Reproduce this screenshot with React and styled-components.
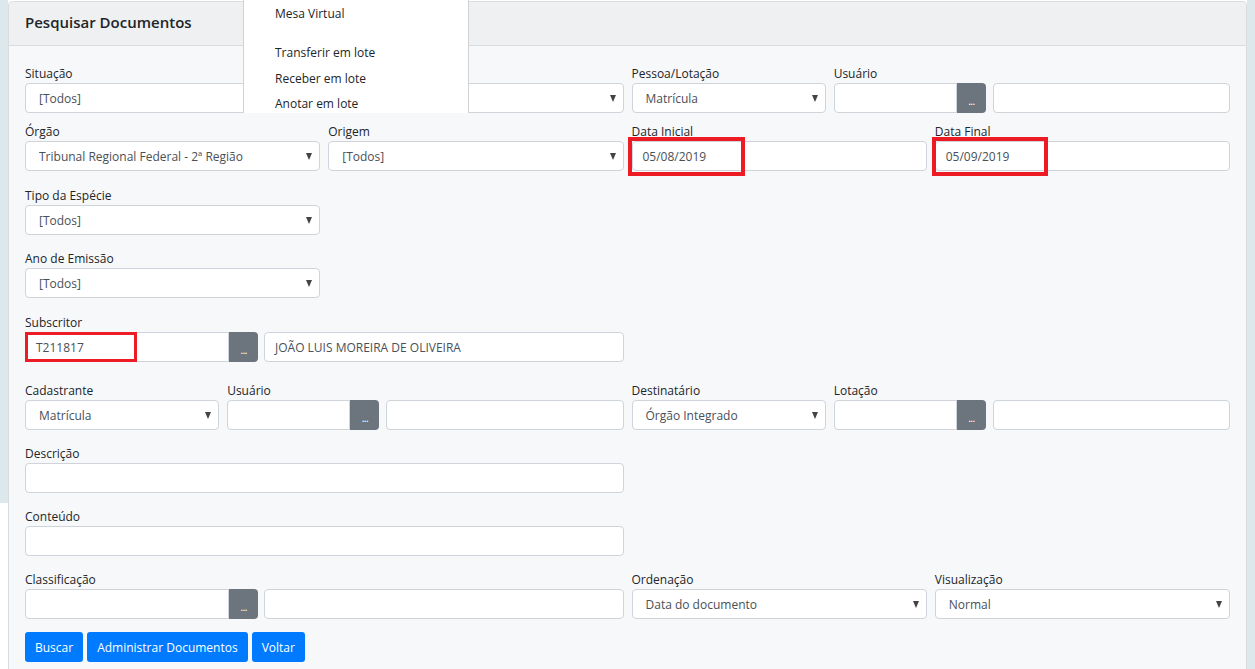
import React from "react";
import styled, { createGlobalStyle } from "styled-components";

const GlobalStyle = createGlobalStyle`
  html, body { margin: 0; padding: 0; background: #fff; }
  body {
    font-family: "Open Sans", "Noto Sans", sans-serif;
    font-size: 12px;
    color: #212529;
  }
  * { box-sizing: border-box; }
`;

const Page = styled.div`
  position: relative;
  display: flex;
  width: 1255px;
  height: 669px;
  overflow: hidden;
`;

const SideStrip = styled.div`
  flex: 0 0 ${(p) => p.$w}px;
  background: ${(p) =>
    p.$cut
      ? `linear-gradient(#dce8ec 0, #dce8ec ${p.$cut}px, #fff ${p.$cut}px)`
      : "#dce8ec"};
`;

const Card = styled.section`
  flex: 1;
  align-self: flex-start;
  margin-top: 1px;
  min-height: 720px;
  background: #f7f8fa;
  border: 1px solid #dadde0;
  border-radius: 4px;
`;

const CardHeader = styled.header`
  height: 44px;
  display: flex;
  align-items: center;
  padding: 0 16px 4px;
  background: #eff0f2;
  border-bottom: 1px solid #dadde0;
  border-radius: 4px 4px 0 0;
`;

const Title = styled.h5`
  margin: 0;
  font-size: 15px;
  font-weight: 600;
  color: #212529;
`;

const CardBody = styled.div`
  padding: 18px 16px 0;
`;

const Row = styled.div`
  display: grid;
  grid-template-columns: repeat(12, 1fr);
  column-gap: 8px;
  margin-bottom: ${(p) => p.$mb}px;
`;

const Field = styled.div`
  grid-column: span ${(p) => p.$span};
  display: flex;
  flex-direction: column;
  min-width: 0;
`;

const Label = styled.label`
  display: block;
  height: 19px;
  line-height: 19px;
  white-space: nowrap;
  color: #212529;
`;

const Control = styled.div`
  position: relative;
  flex: ${(p) => (p.$grow ? "1 1 auto" : "0 0 auto")};
  height: 30px;
  min-width: 0;
  display: flex;
  align-items: center;
  padding: ${(p) => (p.$select ? "0 7px 0 13px" : "0 10px")};
  background: #fff;
  border: 1px solid #ced4da;
  border-radius: ${(p) => (p.$joined ? "4px 0 0 4px" : "4px")};
  color: #495057;
  white-space: nowrap;
`;

const SelectText = styled.span`
  flex: 1;
  overflow: hidden;
`;

const Caret = styled.span`
  width: 0;
  height: 0;
  border-left: 3.5px solid transparent;
  border-right: 3.5px solid transparent;
  border-top: 7px solid #444;
`;

const Pair = styled.div`
  display: grid;
  grid-template-columns: ${(p) => p.$first}px 1fr;
  column-gap: ${(p) => p.$gap}px;
`;

const Group = styled.div`
  display: flex;
`;

const DotsButton = styled.button`
  flex: 0 0 29px;
  height: 30px;
  border: none;
  border-radius: 0 4px 4px 0;
  background: #6c757d;
  color: #fff;
  font-family: "DejaVu Sans", sans-serif;
  font-size: 10px;
  line-height: 1;
  padding: 8px 0 0;
  letter-spacing: -1px;
`;

const Highlight = styled.span`
  position: absolute;
  left: ${(p) => p.$l}px;
  top: ${(p) => p.$t}px;
  width: ${(p) => p.$w}px;
  height: ${(p) => p.$h}px;
  border: ${(p) => p.$b}px solid #ed1c24;
  pointer-events: none;
`;

const Buttons = styled.div`
  display: flex;
  gap: 4px;
`;

const PrimaryButton = styled.button`
  height: 30px;
  padding: 0 10px;
  border: none;
  border-radius: 3px;
  background: #007bff;
  color: #fff;
  font-family: inherit;
  font-size: 12px;
`;

const Menu = styled.ul`
  position: absolute;
  left: 243px;
  top: 0;
  width: 226px;
  height: 113px;
  margin: 0;
  padding: 1px 0 0;
  list-style: none;
  background: #fff;
  border-left: 1px solid #d2d2d2;
  border-right: 1px solid #d2d2d2;
  overflow: hidden;
`;

const MenuItem = styled.li`
  height: 25.5px;
  line-height: 25.5px;
  padding: 0 31px;
  color: #212529;
  white-space: nowrap;
`;

const MenuDivider = styled.li`
  height: 13.5px;
`;

const MenuMarker = styled.span`
  position: absolute;
  left: 245px;
  top: -40px;
  width: 224px;
  height: 45.5px;
  border: 5px solid #ed1c24;
`;

const Select = ({ children }) => (
  <Control $select>
    <SelectText>{children}</SelectText>
    <Caret />
  </Control>
);

const Lookup = ({ value, mark }) => (
  <Group>
    <Control $joined $grow>
      {value}
      {mark}
    </Control>
    <DotsButton>...</DotsButton>
  </Group>
);

export default function App() {
  return (
    <>
      <GlobalStyle />
      <Page>
        <SideStrip $w={8} $cut={503} />
        <Card>
          <CardHeader>
            <Title>Pesquisar Documentos</Title>
          </CardHeader>
          <CardBody>
            <Row $mb={9}>
              <Field $span={3}>
                <Label>Situação</Label>
                <Select>[Todos]</Select>
              </Field>
              <Field $span={3}>
                <Label />
                <Select />
              </Field>
              <Field $span={2}>
                <Label>Pessoa/Lotação</Label>
                <Select>Matrícula</Select>
              </Field>
              <Field $span={4}>
                <Label>Usuário</Label>
                <Pair $first={152} $gap={7}>
                  <Lookup />
                  <Control />
                </Pair>
              </Field>
            </Row>

            <Row $mb={15}>
              <Field $span={3}>
                <Label>Órgão</Label>
                <Select>Tribunal Regional Federal - 2ª Região</Select>
              </Field>
              <Field $span={3}>
                <Label>Origem</Label>
                <Select>[Todos]</Select>
              </Field>
              <Field $span={3}>
                <Label>Data Inicial</Label>
                <Control>
                  05/08/2019
                  <Highlight $l={-5} $t={-5} $w={117} $h={39} $b={4} />
                </Control>
              </Field>
              <Field $span={3}>
                <Label>Data Final</Label>
                <Control>
                  05/09/2019
                  <Highlight $l={-4} $t={-5} $w={116} $h={39} $b={4} />
                </Control>
              </Field>
            </Row>

            <Row $mb={14}>
              <Field $span={3}>
                <Label>Tipo da Espécie</Label>
                <Select>[Todos]</Select>
              </Field>
            </Row>

            <Row $mb={15}>
              <Field $span={3}>
                <Label>Ano de Emissão</Label>
                <Select>[Todos]</Select>
              </Field>
            </Row>

            <Row $mb={19}>
              <Field $span={6}>
                <Label>Subscritor</Label>
                <Pair $first={233} $gap={6}>
                  <Lookup
                    value="T211817"
                    mark={<Highlight $l={-1} $t={-1} $w={112} $h={30} $b={3} />}
                  />
                  <Control>JOÃO LUIS MOREIRA DE OLIVEIRA</Control>
                </Pair>
              </Field>
            </Row>

            <Row $mb={14}>
              <Field $span={2}>
                <Label>Cadastrante</Label>
                <Select>Matrícula</Select>
              </Field>
              <Field $span={4}>
                <Label>Usuário</Label>
                <Pair $first={152} $gap={7}>
                  <Lookup />
                  <Control />
                </Pair>
              </Field>
              <Field $span={2}>
                <Label>Destinatário</Label>
                <Select>Órgão Integrado</Select>
              </Field>
              <Field $span={4}>
                <Label>Lotação</Label>
                <Pair $first={152} $gap={7}>
                  <Lookup />
                  <Control />
                </Pair>
              </Field>
            </Row>

            <Row $mb={14}>
              <Field $span={6}>
                <Label>Descrição</Label>
                <Control />
              </Field>
            </Row>

            <Row $mb={14}>
              <Field $span={6}>
                <Label>Conteúdo</Label>
                <Control />
              </Field>
            </Row>

            <Row $mb={13}>
              <Field $span={6}>
                <Label>Classificação</Label>
                <Pair $first={233} $gap={6}>
                  <Lookup />
                  <Control />
                </Pair>
              </Field>
              <Field $span={3}>
                <Label>Ordenação</Label>
                <Select>Data do documento</Select>
              </Field>
              <Field $span={3}>
                <Label>Visualização</Label>
                <Select>Normal</Select>
              </Field>
            </Row>

            <Buttons>
              <PrimaryButton>Buscar</PrimaryButton>
              <PrimaryButton>Administrar Documentos</PrimaryButton>
              <PrimaryButton>Voltar</PrimaryButton>
            </Buttons>
          </CardBody>
        </Card>
        <SideStrip $w={8} />

        <MenuMarker />
        <Menu>
          <MenuItem>Mesa Virtual</MenuItem>
          <MenuDivider />
          <MenuItem>Transferir em lote</MenuItem>
          <MenuItem>Receber em lote</MenuItem>
          <MenuItem>Anotar em lote</MenuItem>
        </Menu>
      </Page>
    </>
  );
}
